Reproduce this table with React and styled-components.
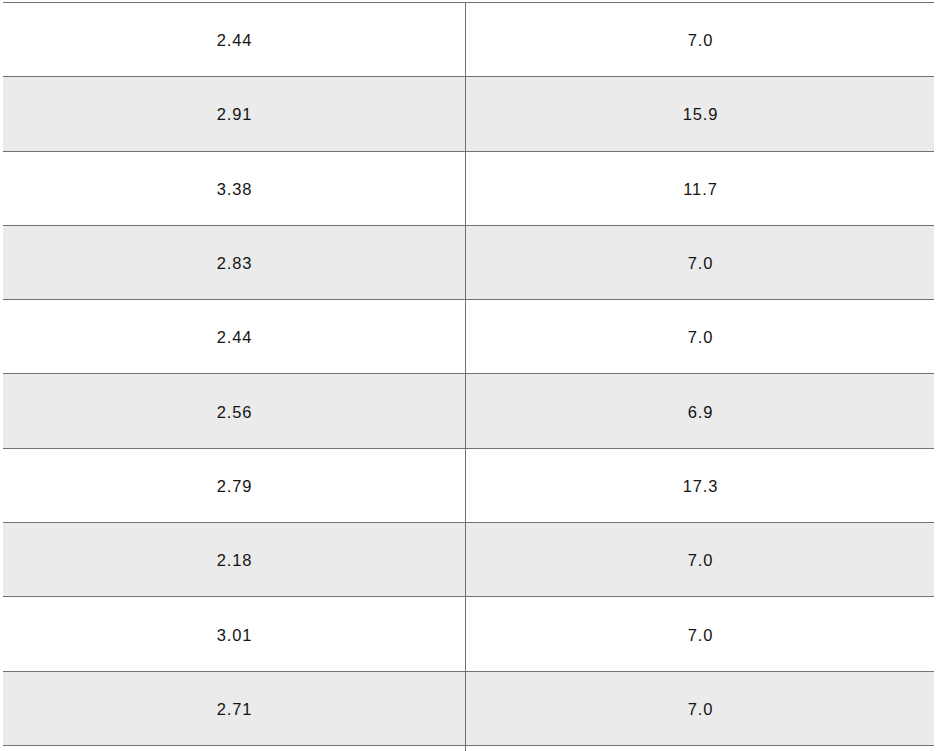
import React from "react";
import styled, { createGlobalStyle } from "styled-components";

const rows = [
  ["2.44", "7.0"],
  ["2.91", "15.9"],
  ["3.38", "11.7"],
  ["2.83", "7.0"],
  ["2.44", "7.0"],
  ["2.56", "6.9"],
  ["2.79", "17.3"],
  ["2.18", "7.0"],
  ["3.01", "7.0"],
  ["2.71", "7.0"],
  ["", ""],
];

const GlobalStyle = createGlobalStyle`
  body {
    margin: 0;
    background: #ffffff;
    font-family: "Liberation Sans", Arial, sans-serif;
  }
`;

const Page = styled.div`
  padding: 2px 6px 0 3px;
  height: 751px;
  overflow: hidden;
  box-sizing: border-box;
`;

const Table = styled.div`
  width: 931px;
  border-top: 1px solid #727272;
`;

const Row = styled.div`
  display: grid;
  grid-template-columns: 462px 1fr;
  height: 74.3px;
  box-sizing: border-box;
  border-bottom: 1px solid #727272;
  background: ${p => (p.$shaded ? "#ebebeb" : "#ffffff")};
`;

const Cell = styled.div`
  display: flex;
  align-items: center;
  justify-content: center;
  font-size: 16.5px;
  letter-spacing: 0.9px;
  padding: 2px 0 0 1px;
  color: #141414;
  & + & {
    border-left: 1px solid #727272;
  }
`;

const App = () => {
  return (
    <>
      <GlobalStyle />
      <Page>
        <Table>
          {rows.map((r, i) => (
            <Row key={i} $shaded={i % 2 === 1}>
              <Cell>{r[0]}</Cell>
              <Cell>{r[1]}</Cell>
            </Row>
          ))}
        </Table>
      </Page>
    </>
  );
};

export default App;
